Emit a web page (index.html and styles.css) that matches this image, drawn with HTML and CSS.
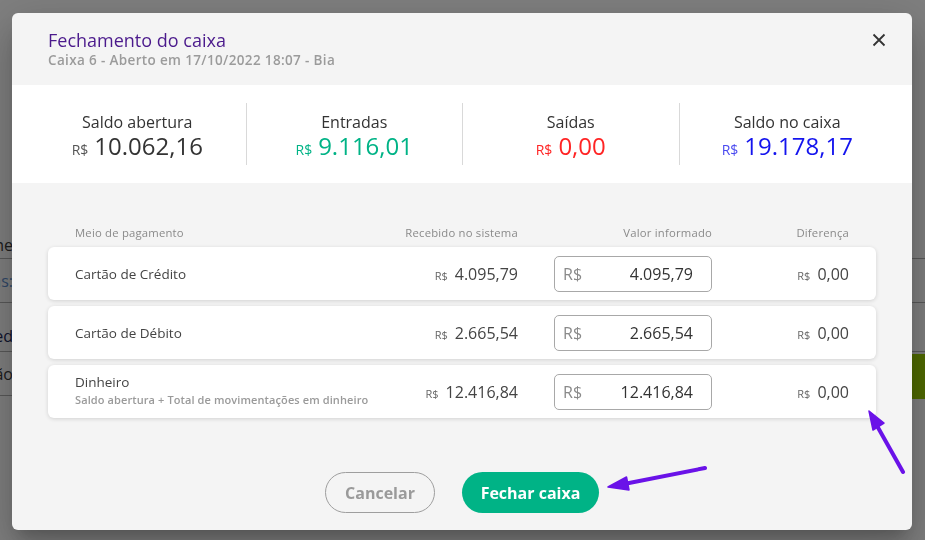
FILE: index.html
```html
<!DOCTYPE html>
<html lang="pt-BR">
<head>
<meta charset="utf-8">
<title>Fechamento do caixa</title>
<link rel="stylesheet" href="styles.css">
</head>
<body>
<div class="page">
  <div class="bg-row bg-row-head"><span class="bg-cell">Nome</span></div>
  <div class="bg-row bg-row-tall"><span class="bg-cell bg-link">Cupons:</span></div>
  <div class="bg-row bg-row-mid"><span class="bg-cell bg-strong">Cred</span></div>
  <div class="bg-row bg-row-tall"><span class="bg-cell">Cartão</span><span class="bg-btn"></span></div>
</div>

<div class="overlay">
  <div class="modal">
    <header class="modal-header">
      <div class="title-row">
        <h1 class="title">Fechamento do caixa</h1>
        <button class="close" aria-label="Fechar">
          <svg width="14" height="14" viewBox="0 0 14 14"><path d="M1.5 1.5 L12.5 12.5 M12.5 1.5 L1.5 12.5" stroke="#333" stroke-width="1.8" fill="none"/></svg>
        </button>
      </div>
      <p class="subtitle">Caixa 6 - Aberto em 17/10/2022 18:07 - Bia</p>
    </header>

    <section class="stats">
      <div class="stat">
        <div class="stat-label">Saldo abertura</div>
        <div class="stat-value"><span class="cur">R$</span>10.062,16</div>
      </div>
      <div class="stat">
        <div class="stat-label">Entradas</div>
        <div class="stat-value green"><span class="cur">R$</span>9.116,01</div>
      </div>
      <div class="stat">
        <div class="stat-label">Saídas</div>
        <div class="stat-value red"><span class="cur">R$</span>0,00</div>
      </div>
      <div class="stat">
        <div class="stat-label">Saldo no caixa</div>
        <div class="stat-value blue"><span class="cur">R$</span>19.178,17</div>
      </div>
    </section>

    <section class="payments">
      <div class="grid head">
        <span>Meio de pagamento</span>
        <span class="r">Recebido no sistema</span>
        <span class="r">Valor informado</span>
        <span class="r">Diferença</span>
      </div>

      <div class="grid card">
        <div class="method">Cartão de Crédito</div>
        <div class="r money"><span class="cur-s">R$</span>4.095,79</div>
        <div class="r"><div class="field"><span class="field-cur">R$</span><span class="field-val">4.095,79</span></div></div>
        <div class="r money"><span class="cur-s">R$</span>0,00</div>
      </div>

      <div class="grid card">
        <div class="method">Cartão de Débito</div>
        <div class="r money"><span class="cur-s">R$</span>2.665,54</div>
        <div class="r"><div class="field"><span class="field-cur">R$</span><span class="field-val">2.665,54</span></div></div>
        <div class="r money"><span class="cur-s">R$</span>0,00</div>
      </div>

      <div class="grid card">
        <div class="method method-two">Dinheiro<div class="method-sub">Saldo abertura + Total de movimentações em dinheiro</div></div>
        <div class="r money"><span class="cur-s">R$</span>12.416,84</div>
        <div class="r"><div class="field"><span class="field-cur">R$</span><span class="field-val">12.416,84</span></div></div>
        <div class="r money"><span class="cur-s">R$</span>0,00</div>
      </div>
    </section>

    <footer class="modal-footer">
      <button class="btn btn-outline">Cancelar</button>
      <button class="btn btn-primary">Fechar caixa</button>
    </footer>
  </div>

  <svg class="annotations" width="925" height="540" viewBox="0 0 925 540">
    <g stroke="#6a12e8" stroke-width="4" stroke-linecap="round" fill="#6a12e8">
      <line x1="705" y1="468" x2="624" y2="484"/>
      <polygon points="608,487 626.5,477 629,490" stroke-width="1.5" stroke-linejoin="round"/>
      <line x1="903" y1="472" x2="876" y2="424"/>
      <polygon points="869,411 884,423 873,430" stroke-width="1.5" stroke-linejoin="round"/>
    </g>
  </svg>
</div>
</body>
</html>
```

FILE: styles.css
```css
* { box-sizing: border-box; }

html, body {
  margin: 0;
  padding: 0;
  width: 925px;
  height: 540px;
  overflow: hidden;
  background: #ffffff;
  font-family: "Open Sans", "Noto Sans", sans-serif;
}

/* underlying page (dimmed by the overlay) */
.page {
  padding-top: 231px;
}
.bg-row {
  display: flex;
  align-items: center;
  justify-content: space-between;
  border-bottom: 1px solid #b2b2b2;
  font-size: 16px;
  color: #3a3a3a;
}
.bg-row-head { height: 28px; }
.bg-row-tall { height: 44px; }
.bg-row-mid { height: 49px; align-items: flex-end; padding-bottom: 4px; }
.bg-cell {
  width: 13px;
  display: flex;
  justify-content: flex-end;
  white-space: nowrap;
}
.bg-link { color: #5f8fd0; }
.bg-strong { color: #1d2a5a; }
.bg-btn {
  width: 60px;
  height: 45px;
  background: #9fd400;
  align-self: flex-start;
  margin-top: 2px;
}

/* overlay + modal */
.overlay {
  position: fixed;
  inset: 0;
  background: rgba(0, 0, 0, 0.5);
  display: flex;
  justify-content: flex-start;
  align-items: flex-start;
  padding: 13px 0 0 12px;
}

.modal {
  width: 900px;
  height: 517px;
  background: #f4f4f4;
  border-radius: 6px;
  overflow: hidden;
  box-shadow: 0 11px 15px -7px rgba(0,0,0,.2), 0 24px 38px 3px rgba(0,0,0,.14), 0 9px 46px 8px rgba(0,0,0,.12);
}

.modal-header {
  height: 72px;
  padding: 16px 26px 0 36px;
}
.title-row {
  display: flex;
  align-items: center;
  justify-content: space-between;
  height: 22px;
}
.title {
  margin: 0;
  font-size: 18px;
  line-height: 22px;
  font-weight: 400;
  color: #4b1a8c;
}
.close {
  border: 0;
  background: transparent;
  padding: 0;
  width: 14px;
  height: 14px;
  display: flex;
  cursor: pointer;
}
.subtitle {
  margin: 0;
  font-size: 13.5px;
  letter-spacing: 0.35px;
  line-height: 18px;
  font-weight: 600;
  color: #9b9b9b;
}

/* stats band */
.stats {
  background: #ffffff;
  padding: 18px 17px;
  display: grid;
  grid-template-columns: repeat(4, 1fr);
}
.stat {
  height: 62px;
  padding-top: 9px;
  text-align: center;
  border-left: 1px solid #d9d9d9;
}
.stat:first-child { border-left: 0; }
.stat-label {
  font-size: 16px;
  line-height: 20px;
  color: #333;
}
.stat-value {
  font-size: 24px;
  line-height: 28px;
  color: #333;
}
.cur {
  font-size: 14px;
  margin-right: 6px;
  color: #555;
}
.green, .green .cur { color: #00b386; }
.red, .red .cur { color: #ff2424; }
.blue { color: #1414ee; }
.blue .cur { color: #4a4af0; }

/* payments table */
.payments {
  padding: 42px 36px 0;
  display: flex;
  flex-direction: column;
  gap: 6px;
}
.grid {
  display: grid;
  grid-template-columns: 1fr 140px 194px 137px;
  align-items: center;
  padding: 0 27px;
}
.r { text-align: right; display: flex; justify-content: flex-end; align-items: baseline; }
.head {
  font-size: 11.3px;
  letter-spacing: 0.2px;
  line-height: 16px;
  color: #8a8a8a;
}
.card {
  height: 53px;
  background: #ffffff;
  border-radius: 6px;
  box-shadow: 0 1px 4px rgba(0,0,0,.14);
}
.method {
  font-size: 13.5px;
  line-height: 18px;
  color: #444;
}
.method-two {
  margin-top: -3px;
}
.method-sub {
  font-size: 11px;
  letter-spacing: 0.1px;
  line-height: 15px;
  font-weight: 600;
  color: #9a9a9a;
  margin-top: 1px;
}
.money {
  font-size: 16px;
  color: #444;
}
.cur-s {
  font-size: 11px;
  color: #666;
  margin-right: 7px;
}
.field {
  width: 158px;
  height: 36px;
  border: 1px solid #a8a8a8;
  border-radius: 5px;
  display: flex;
  align-items: center;
  justify-content: space-between;
  padding: 0 18px 0 8px;
  background: #fff;
}
.field-cur {
  font-size: 16px;
  color: #8a8a8a;
}
.field-val {
  font-size: 16px;
  color: #333;
}

/* footer */
.modal-footer {
  display: flex;
  justify-content: center;
  gap: 27px;
  padding-top: 54px;
}
.btn {
  height: 41px;
  border-radius: 21px;
  font-family: inherit;
  font-size: 16px;
  font-weight: 700;
  cursor: pointer;
}
.btn-outline {
  width: 110px;
  background: transparent;
  border: 1px solid #9e9e9e;
  color: #9a9a9a;
}
.btn-primary {
  width: 137px;
  background: #00b386;
  border: 0;
  color: #ffffff;
}

.annotations {
  position: absolute;
  left: 0;
  top: 0;
  pointer-events: none;
}
```
